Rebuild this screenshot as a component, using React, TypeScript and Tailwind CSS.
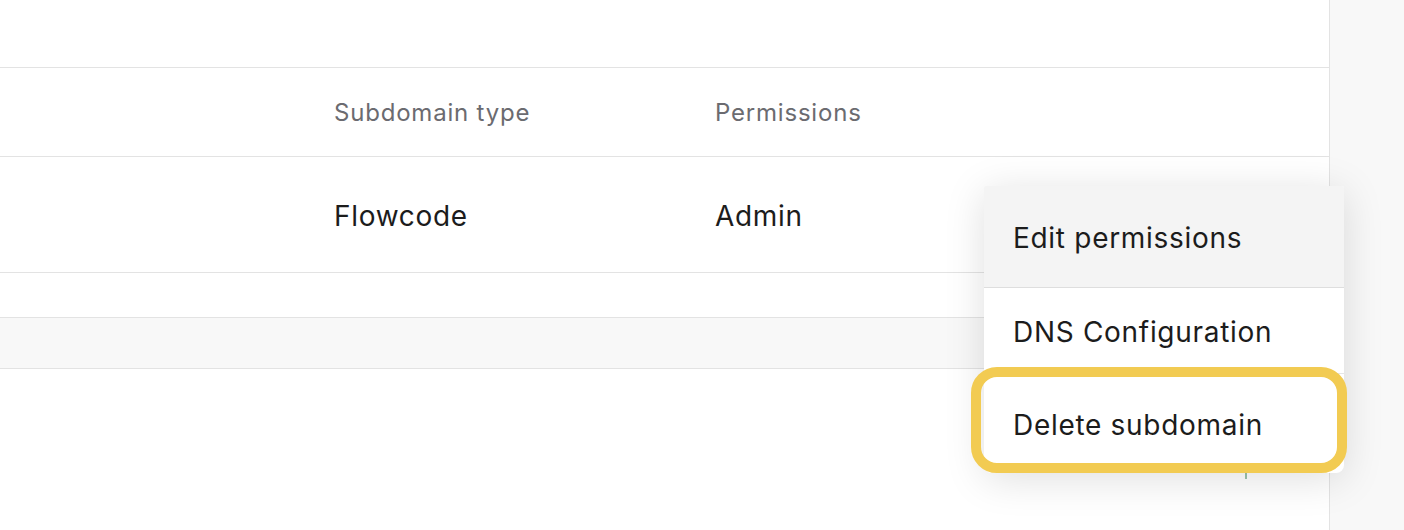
import React from "react";

export default function App() {
  return (
    <div
      className="relative flex h-[530px] w-[1404px] overflow-hidden bg-white"
      style={{ fontFamily: "Inter, 'Noto Sans', sans-serif" }}
    >
      <div className="flex w-[1330px] flex-col border-r border-[#e3e3e3] bg-white">
        <div className="h-[67px]" />
        <div className="grid h-[90px] grid-cols-[334px_381px_1fr] items-center border-y border-[#e3e3e3] pt-[2px] text-[24px] tracking-[0.8px] text-[#6b6b70]">
          <div />
          <div>Subdomain type</div>
          <div>Permissions</div>
        </div>
        <div className="grid h-[116px] grid-cols-[334px_381px_1fr] items-center border-b border-[#e3e3e3] pt-[2px] text-[28px] tracking-[0.7px] text-[#1c1c1c]">
          <div />
          <div>Flowcode</div>
          <div>Admin</div>
        </div>
        <div className="h-[45px] border-b border-[#e3e3e3]" />
        <div className="h-[51px] border-b border-[#e3e3e3] bg-[#f8f8f8]" />
        <div className="flex-1" />
      </div>
      <div className="flex-1 bg-[#f8f8f8]" />

      {/* small element peeking below the menu */}
      <div className="absolute left-[1245px] top-[470px] h-[9px] w-[2px] bg-[#9cc3aa]" />

      {/* dropdown menu */}
      <div className="absolute left-[984px] top-[186px] w-[360px] overflow-hidden rounded-b-[8px] rounded-t-[2px] bg-white shadow-[0_6px_40px_rgba(0,0,0,0.13)] text-[28px] tracking-[0.7px] text-[#1c1c1c]">
        <div className="flex h-[102px] items-center border-b border-[#dedede] bg-[#f4f4f4] px-[29px] pt-[2px]">
          Edit permissions
        </div>
        <div className="flex h-[86px] items-center border-b border-[#e6e6e6] px-[29px] pt-[2px]">
          DNS Configuration
        </div>
        <div className="flex h-[99px] items-center px-[29px] pt-[3px]">Delete subdomain</div>
      </div>

      {/* highlight ring */}
      <div className="pointer-events-none absolute left-[971px] top-[367px] h-[106px] w-[376px] rounded-[26px] border-[10px] border-[#f2cb52]" />
    </div>
  );
}
